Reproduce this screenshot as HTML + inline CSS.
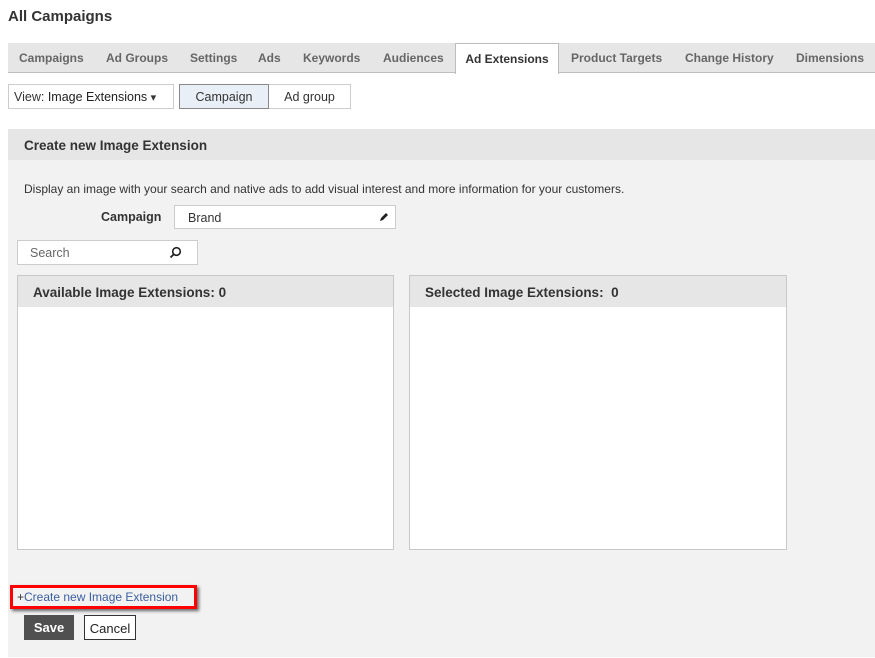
<!DOCTYPE html>
<html><head><style>
*{box-sizing:border-box;margin:0;padding:0}
body{width:875px;height:658px;background:#fff;font-family:"Liberation Sans",Arial,sans-serif;font-size:13px;color:#333;position:relative;overflow:hidden}
.a{position:absolute}
h1{position:absolute;left:8px;top:8px;font-size:15px;font-weight:bold;color:#333}
.tabs{left:8px;top:43px;width:867px;height:30px;background:#e6e6e6;border-bottom:1px solid #bdbdbd}
.tab{position:absolute;top:8px;font-weight:bold;color:#666;font-size:12px}
.act{left:455px;top:43px;width:104px;height:31px;background:#fff;border:1px solid #bdbdbd;border-bottom:none;font-weight:bold;color:#333;font-size:12px;text-align:center;padding-top:8px}
.btn{top:84px;height:25px;border:1px solid #ccc;background:#fff;font-size:12.5px;padding-top:5px;text-align:center}
.panel{left:8px;top:129px;width:867px;height:528px;background:#f2f2f2}
.ph{left:8px;top:129px;width:867px;height:31px;background:#e6e6e6;font-weight:bold;font-size:13.5px;padding:9px 0 0 16px}
.box{top:275px;height:275px;background:#fff;border:1px solid #c8c8c8}
.bh{height:31px;background:#e6e6e6;font-weight:bold;font-size:13.5px;padding:9px 0 0 15px}
</style></head><body>
<h1>All Campaigns</h1>
<div class="a tabs">
<span class="tab" style="left:11px">Campaigns</span>
<span class="tab" style="left:98px">Ad Groups</span>
<span class="tab" style="left:182px">Settings</span>
<span class="tab" style="left:250px">Ads</span>
<span class="tab" style="left:295px">Keywords</span>
<span class="tab" style="left:375px">Audiences</span>
<span class="tab" style="left:563px">Product Targets</span>
<span class="tab" style="left:677px">Change History</span>
<span class="tab" style="left:788px">Dimensions</span>
</div>
<div class="a act">Ad Extensions</div>
<div class="a btn" style="left:8px;width:166px;text-align:left;padding-left:5px">View: <span style="color:#222">Image Extensions</span> <span style="font-size:11px">&#9662;</span></div>
<div class="a btn" style="left:179px;width:90px;background:#e8eff6;border-color:#888">Campaign</div>
<div class="a btn" style="left:269px;width:82px;border-left:none">Ad group</div>
<div class="a panel"></div>
<div class="a ph">Create new Image Extension</div>
<div class="a" style="left:24px;top:182px;font-size:12px">Display an image with your search and native ads to add visual interest and more information for your customers.</div>
<div class="a" style="left:101px;top:210px;font-weight:bold;font-size:12.5px">Campaign</div>
<div class="a" style="left:174px;top:205px;width:222px;height:24px;background:#fff;border:1px solid #ccc;padding:5px 0 0 13px;font-size:12.5px">Brand<svg class="a" style="right:6px;top:6px" width="10" height="10" viewBox="0 0 10 10"><path d="M1 9l1-3 5-5 2 2-5 5z" fill="#222"/></svg></div>
<div class="a" style="left:17px;top:240px;width:181px;height:25px;background:#fff;border:1px solid #ccc;padding:5px 0 0 12px;color:#666;font-size:12.5px">Search<svg class="a" style="left:151px;top:5px" width="13" height="13" viewBox="0 0 13 13"><circle cx="7.5" cy="5.5" r="3.8" fill="none" stroke="#222" stroke-width="1.6"/><path d="M5 8l-3.5 3.5" stroke="#222" stroke-width="1.8"/></svg></div>
<div class="a box" style="left:17px;width:377px"><div class="bh">Available Image Extensions: 0</div></div>
<div class="a box" style="left:409px;width:378px"><div class="bh">Selected Image Extensions:&nbsp; 0</div></div>
<div class="a" style="left:10px;top:585px;width:187px;height:24px;border:3px solid #f00;box-shadow:2px 2px 3px #666"></div>
<div class="a" style="left:17px;top:590px;font-size:12px;color:#3a5fa0"><span style="color:#333">+</span>Create new Image Extension</div>
<div class="a" style="left:24px;top:615px;width:50px;height:25px;background:#505050;color:#fff;font-weight:bold;text-align:center;padding-top:5px">Save</div>
<div class="a" style="left:84px;top:615px;width:52px;height:25px;background:#fff;border:1px solid #333;text-align:center;padding-top:5px;color:#222">Cancel</div>
</body></html>
